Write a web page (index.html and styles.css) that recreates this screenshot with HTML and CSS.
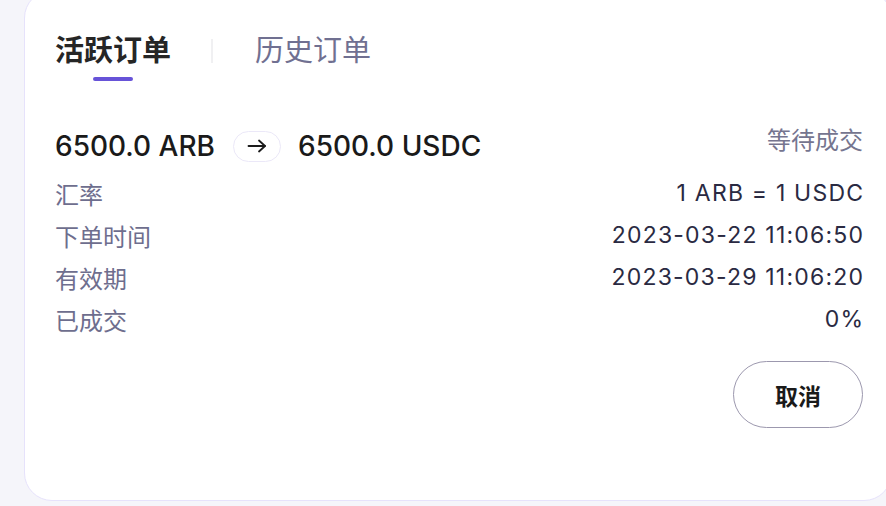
FILE: index.html
```html
<!DOCTYPE html>
<html lang="zh-CN">
<head>
    <meta charset="UTF-8">
    <meta name="viewport" content="width=device-width, initial-scale=1.0">
    <title>订单</title>
    <link rel="stylesheet" href="styles.css">
</head>
<body>
    <div class="card">
        <div class="tabs">
            <div class="tab active">
                <span class="tab-label">活跃订单</span>
                <span class="tab-bar"></span>
            </div>
            <span class="tab-divider"></span>
            <div class="tab">
                <span class="tab-label">历史订单</span>
            </div>
        </div>

        <div class="order">
            <div class="order-head">
                <div class="pair">
                    <span class="amount">6500.0 ARB</span>
                    <span class="arrow-pill">
                        <svg width="20" height="14" viewBox="0 0 20 14" fill="none" stroke="#1c1c1c" stroke-width="1.8" stroke-linecap="round" stroke-linejoin="round">
                            <path d="M1.5 7h16.5"/>
                            <path d="M12 1.5l6 5.5-6 5.5"/>
                        </svg>
                    </span>
                    <span class="amount">6500.0 USDC</span>
                </div>
                <span class="status">等待成交</span>
            </div>

            <div class="detail">
                <span class="label">汇率</span>
                <span class="value">1 ARB = 1 USDC</span>
            </div>
            <div class="detail">
                <span class="label">下单时间</span>
                <span class="value">2023-03-22 11:06:50</span>
            </div>
            <div class="detail">
                <span class="label">有效期</span>
                <span class="value">2023-03-29 11:06:20</span>
            </div>
            <div class="detail">
                <span class="label">已成交</span>
                <span class="value">0%</span>
            </div>

            <div class="actions">
                <button class="cancel-btn">取消</button>
            </div>
        </div>
    </div>
</body>
</html>
```

FILE: styles.css
```css
body {
    font-family: Inter, "Noto Sans CJK SC", sans-serif;
    margin: 0;
    padding: 0;
    background-color: #f5f5fa;
    overflow: hidden;
}

.card {
    box-sizing: border-box;
    width: 868px;
    height: 511px;
    margin: -10px 0 0 24px;
    padding: 40px 28px 0 30px;
    background-color: #fff;
    border: 1px solid #e6e2fb;
    border-radius: 28px;
}

.tabs {
    display: flex;
    align-items: flex-start;
}

.tab {
    display: flex;
    flex-direction: column;
    align-items: center;
}

.tab-label {
    font-size: 29px;
    line-height: 40px;
    color: #707091;
}

.tab.active .tab-label {
    color: #262626;
    font-weight: 600;
}

.tab-bar {
    width: 40px;
    height: 4px;
    margin-top: 6px;
    border-radius: 2px;
    background-color: #6753d8;
}

.tab-divider {
    width: 2px;
    height: 24px;
    margin: 8px 42px 0 40px;
    background-color: #f0f0f2;
}

.order-head {
    display: flex;
    justify-content: space-between;
    align-items: center;
    margin-top: 47px;
    height: 36px;
}

.pair {
    display: flex;
    align-items: center;
}

.amount {
    font-size: 28px;
    font-weight: 500;
    color: #1a1a1a;
}

.arrow-pill {
    display: flex;
    align-items: center;
    justify-content: center;
    width: 48px;
    height: 31px;
    box-sizing: border-box;
    margin: 0 17px 0 18px;
    border: 1px solid #ebe8f8;
    border-radius: 16px;
}

.status {
    align-self: flex-start;
    font-size: 24px;
    line-height: 26px;
    color: #75758f;
}

.detail {
    display: flex;
    justify-content: space-between;
    align-items: center;
    height: 42px;
}

.order-head + .detail {
    margin-top: 8px;
}

.label {
    font-size: 24px;
    color: #6e6e8e;
}

.value {
    margin-right: -1.2px;
    font-size: 23px;
    letter-spacing: 1.2px;
    color: #2a2a42;
}

.actions {
    display: flex;
    justify-content: flex-end;
    margin-top: 21px;
}

.cancel-btn {
    width: 130px;
    height: 67px;
    font-family: Inter, "Noto Sans CJK SC", sans-serif;
    font-size: 23px;
    font-weight: 600;
    color: #1a1a1a;
    background-color: #fff;
    border: 1px solid #9c98ae;
    border-radius: 34px;
    cursor: pointer;
}
```
